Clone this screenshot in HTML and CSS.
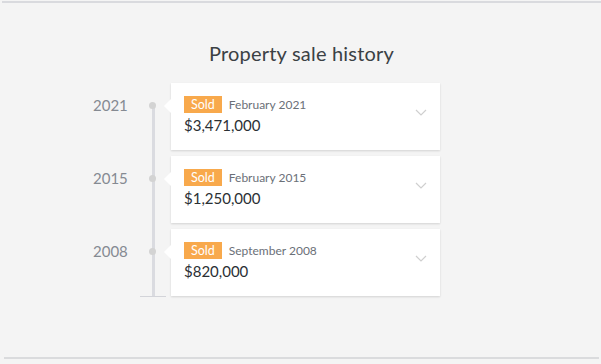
FILE: index.html
```html
<!DOCTYPE html>
<html lang="en">
<head>
    <meta charset="UTF-8">
    <meta name="viewport" content="width=device-width, initial-scale=1.0">
    <title>Property sale history</title>
    <link rel="stylesheet" href="styles.css">
</head>
<body>
    <div class="page">
        <section class="sale-history">
            <h2 class="title">Property sale history</h2>
            <div class="timeline">
                <div class="row">
                    <div class="year">2021</div>
                    <div class="marker"><span class="dot"></span></div>
                    <div class="card">
                        <div class="card-top">
                            <span class="badge">Sold</span>
                            <span class="date">February 2021</span>
                        </div>
                        <div class="price">$3,471,000</div>
                        <svg class="chevron" width="12" height="7" viewBox="0 0 12 7"><path d="M1 1l5 5 5-5" fill="none" stroke="#cfcfcf" stroke-width="1.2"/></svg>
                    </div>
                </div>
                <div class="row">
                    <div class="year">2015</div>
                    <div class="marker"><span class="dot"></span></div>
                    <div class="card">
                        <div class="card-top">
                            <span class="badge">Sold</span>
                            <span class="date">February 2015</span>
                        </div>
                        <div class="price">$1,250,000</div>
                        <svg class="chevron" width="12" height="7" viewBox="0 0 12 7"><path d="M1 1l5 5 5-5" fill="none" stroke="#cfcfcf" stroke-width="1.2"/></svg>
                    </div>
                </div>
                <div class="row">
                    <div class="year">2008</div>
                    <div class="marker"><span class="dot"></span></div>
                    <div class="card">
                        <div class="card-top">
                            <span class="badge">Sold</span>
                            <span class="date">September 2008</span>
                        </div>
                        <div class="price">$820,000</div>
                        <svg class="chevron" width="12" height="7" viewBox="0 0 12 7"><path d="M1 1l5 5 5-5" fill="none" stroke="#cfcfcf" stroke-width="1.2"/></svg>
                    </div>
                </div>
            </div>
        </section>
        <hr class="divider">
    </div>
</body>
</html>
```

FILE: styles.css
```css
body {
    margin: 0;
    background-color: #f4f4f4;
    font-family: Lato, "Open Sans", sans-serif;
}

.page {
    margin: 1px 0 0 2px;
    border-top: 2px solid #d9dade;
    height: 361px;
    display: flex;
    flex-direction: column;
}

.sale-history {
    flex: 1;
}

.title {
    margin: 38px 0 18px;
    text-align: center;
    font-size: 20px;
    font-weight: 400;
    letter-spacing: 0.2px;
    color: #3b4144;
}

.timeline {
    position: relative;
    margin-left: 91px;
    width: 347px;
    display: flex;
    flex-direction: column;
    gap: 6px;
}

.timeline::after {
    content: "";
    position: absolute;
    left: 47px;
    bottom: -1px;
    width: 26px;
    height: 1px;
    background-color: #d3d4d9;
}

.row {
    display: flex;
    height: 67px;
}

.year {
    width: 48px;
    padding-top: 13px;
    font-size: 15px;
    color: #858a92;
}

.marker {
    position: relative;
    width: 24px;
    display: flex;
    justify-content: center;
}

.marker::before {
    content: "";
    width: 3px;
    height: 73px;
    background-color: #dadbe0;
}

.row:first-child .marker::before {
    margin-top: 23px;
    height: 50px;
}

.row:last-child .marker::before {
    height: 67px;
}

.dot {
    position: absolute;
    top: 19px;
    left: 8px;
    width: 7px;
    height: 7px;
    border-radius: 50%;
    background-color: #d3d3d3;
}

.card {
    position: relative;
    flex: 1;
    margin-left: 6px;
    padding: 13px 13px 0;
    background-color: #ffffff;
    box-shadow: 0 1px 2px rgba(0, 0, 0, 0.14);
}

.card::before {
    content: "";
    position: absolute;
    left: -7px;
    top: 16px;
    border-top: 7px solid transparent;
    border-bottom: 7px solid transparent;
    border-right: 7px solid #ffffff;
}

.card-top {
    display: flex;
    align-items: center;
    gap: 7px;
}

.badge {
    display: inline-block;
    padding: 0 7px;
    height: 17px;
    line-height: 17px;
    background-color: #f8a94c;
    color: #ffffff;
    font-size: 12.5px;
}

.date {
    font-size: 12px;
    color: #6b7078;
}

.price {
    margin-top: 3px;
    font-size: 15px;
    color: #2b3034;
}

.chevron {
    position: absolute;
    right: 13px;
    top: 26px;
}

.divider {
    margin: 0 2px 5px 2px;
    border: 0;
    border-top: 2px solid #dadbdd;
}
```
